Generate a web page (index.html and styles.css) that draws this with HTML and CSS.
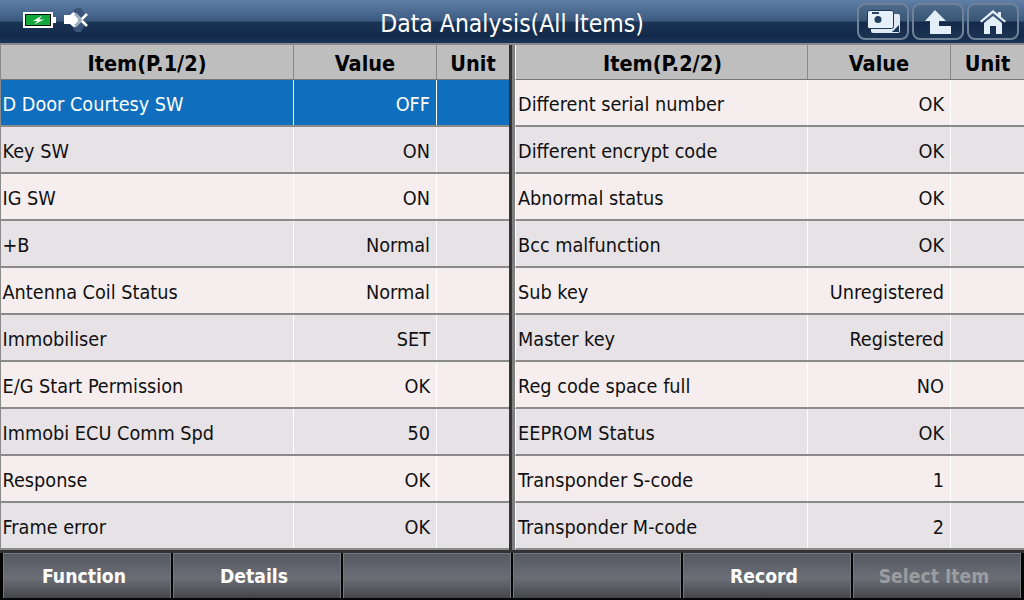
FILE: index.html
```html
<!DOCTYPE html>
<html>
<head>
<meta charset="UTF-8">
<title>Data Analysis</title>
<link rel="stylesheet" href="styles.css">
</head>
<body>
<div id="wrap">
	<div class="topbar">
		<div class="status">
			<svg class="battery" width="34" height="16" viewBox="0 0 34 16">
				<rect x="1" y="1" width="28" height="14" fill="#111" stroke="#fff" stroke-width="2"/>
				<rect x="3" y="3" width="24" height="10" fill="#12a83c"/>
				<rect x="30" y="5" width="3" height="6" fill="#fff"/>
				<path d="M19 3.500 L10 9 L14.500 9 L11 12.500 L21 7.500 L16 7.500 Z" fill="#fff"/>
			</svg>
			<svg class="mute" width="24" height="24" viewBox="0 0 24 24">
				<path d="M0 7 H6 L14 0 V23 L6 16 H0 Z" fill="#fff"/>
				<path d="M9 3 L16 12 L9 21 L15 27 L24 12 L15 -3 Z" fill="#3a5578"/>
				<path d="M11 6 L23 18 M23 6 L11 18" stroke="#fff" stroke-width="2.500"/>
				<path d="M11 6 L17 12 L11 18" fill="none" stroke="#9fb0c4" stroke-width="2.500"/>
			</svg>
		</div>
		<div class="title">Data Analysis(All Items)</div>
		<div class="topbtns">
			<div class="topbtn">
				<svg width="33" height="23" viewBox="0 0 33 23">
					<rect x="4" y="4" width="29" height="19" rx="2" fill="#dfeaf5"/>
					<path d="M32 15 V22 H25 Z" fill="#1d3656"/>
					<rect x="0.500" y="0.500" width="26" height="18" rx="2" fill="#e6f0fa" stroke="#1d3656"/>
					<rect x="5" y="2" width="7" height="2" fill="#2a4565"/>
					<circle cx="11" cy="9.500" r="3.500" fill="#22405f"/>
				</svg>
			</div>
			<div class="topbtn">
				<svg width="26" height="24" viewBox="0 0 26 24">
					<path d="M10 0 L21 11 H14 V16 H26 V24 H5 V11 H0 Z" fill="#e4eef8"/>
				</svg>
			</div>
			<div class="topbtn">
				<svg width="26" height="24" viewBox="0 0 26 24">
					<path d="M13 0 L18 4 V2 H21 V7 L26 11 L24.500 12.500 L13 3 L1.500 12.500 L0 11 Z" fill="#e4eef8"/>
					<path d="M4 13 L13 6 L22 13 V24 H16 V16 H10 V24 H4 Z" fill="#e4eef8"/>
				</svg>
			</div>
		</div>
	</div>

	<div class="tables">
		<div class="panel">
			<div class="row head"><div class="c1">Item(P.1/2)</div><div class="c2">Value</div><div class="c3">Unit</div></div>
			<div class="row sel"><div class="c1">D Door Courtesy SW</div><div class="c2">OFF</div><div class="c3"></div></div>
			<div class="row even"><div class="c1">Key SW</div><div class="c2">ON</div><div class="c3"></div></div>
			<div class="row"><div class="c1">IG SW</div><div class="c2">ON</div><div class="c3"></div></div>
			<div class="row even"><div class="c1">+B</div><div class="c2">Normal</div><div class="c3"></div></div>
			<div class="row"><div class="c1">Antenna Coil Status</div><div class="c2">Normal</div><div class="c3"></div></div>
			<div class="row even"><div class="c1">Immobiliser</div><div class="c2">SET</div><div class="c3"></div></div>
			<div class="row"><div class="c1">E/G Start Permission</div><div class="c2">OK</div><div class="c3"></div></div>
			<div class="row even"><div class="c1">Immobi ECU Comm Spd</div><div class="c2">50</div><div class="c3"></div></div>
			<div class="row"><div class="c1">Response</div><div class="c2">OK</div><div class="c3"></div></div>
			<div class="row even"><div class="c1">Frame error</div><div class="c2">OK</div><div class="c3"></div></div>
		</div>
		<div class="split"></div>
		<div class="panel">
			<div class="row head"><div class="c1">Item(P.2/2)</div><div class="c2">Value</div><div class="c3">Unit</div></div>
			<div class="row"><div class="c1">Different serial number</div><div class="c2">OK</div><div class="c3"></div></div>
			<div class="row even"><div class="c1">Different encrypt code</div><div class="c2">OK</div><div class="c3"></div></div>
			<div class="row"><div class="c1">Abnormal status</div><div class="c2">OK</div><div class="c3"></div></div>
			<div class="row even"><div class="c1">Bcc malfunction</div><div class="c2">OK</div><div class="c3"></div></div>
			<div class="row"><div class="c1">Sub key</div><div class="c2">Unregistered</div><div class="c3"></div></div>
			<div class="row even"><div class="c1">Master key</div><div class="c2">Registered</div><div class="c3"></div></div>
			<div class="row"><div class="c1">Reg code space full</div><div class="c2">NO</div><div class="c3"></div></div>
			<div class="row even"><div class="c1">EEPROM Status</div><div class="c2">OK</div><div class="c3"></div></div>
			<div class="row"><div class="c1">Transponder S-code</div><div class="c2">1</div><div class="c3"></div></div>
			<div class="row even"><div class="c1">Transponder M-code</div><div class="c2">2</div><div class="c3"></div></div>
		</div>
	</div>

	<div class="bottombar">
		<div class="btn">Function</div>
		<div class="btn">Details</div>
		<div class="btn"></div>
		<div class="btn"></div>
		<div class="btn">Record</div>
		<div class="btn off">Select Item</div>
	</div>
</div>
</body>
</html>
```

FILE: styles.css
```css
* {
	margin: 0;
	padding: 0;
	box-sizing: border-box;
}

html,
body {
	height: 100%;
	overflow: hidden;
}

#wrap {
	width: 1024px;
	height: 600px;
	display: flex;
	flex-direction: column;
	font-family: "DejaVu Sans Condensed", "DejaVu Sans", sans-serif;
	background: #555;
}

.topbar {
	height: 45px;
	display: flex;
	align-items: center;
	position: relative;
	border-bottom: 2px solid #8a8a8a;
	background: linear-gradient(#5f7fa6 0, #3c5a80 21px, #1b3557 22px, #14294a 36px, #1c3658 43px);
}

.status {
	display: flex;
	align-items: center;
	gap: 7px;
	padding: 0 0 3px 23px;
}

.title {
	position: absolute;
	left: 0;
	right: 0;
	top: 9px;
	text-align: center;
	color: #fff;
	font-size: 24.500px;
	line-height: 30px;
}

.topbtns {
	margin-left: auto;
	display: flex;
	gap: 3px;
	padding-right: 5px;
}

.topbtn {
	width: 52px;
	height: 37px;
	display: flex;
	align-items: center;
	justify-content: center;
	border: 2px solid #6f8298;
	border-radius: 8px;
	background: linear-gradient(#4d6a8b 0, #3a5676 48%, #15294a 52%, #1c3454 100%);
}

.tables {
	height: 505px;
	display: flex;
}

.panel {
	width: 509px;
	display: flex;
	flex-direction: column;
	padding-left: 1px;
	background: #8a8a8a;
}

.split + .panel {
	padding-left: 0;
}

.split {
	width: 6px;
	background: linear-gradient(90deg, #333 0, #333 3px, #808080 3px);
}

.row {
	display: flex;
	height: 47px;
	border-bottom: 2px solid #8a8a8a;
	font-size: 19.700px;
	line-height: 49px;
	color: #111;
	background: #f6eeee;
}

.split + .panel .row {
	border-left: 1px solid #fff;
}

.row.even {
	background: #e6e2e6;
}

.row.sel {
	background: #0f6ebe;
	color: #fff;
}

.row.head {
	height: 35px;
	border-bottom: 1px solid #777;
	background: #bebebe;
	font-weight: bold;
	font-size: 21.500px;
	line-height: 38px;
	color: #000;
}

.c1 {
	width: 292px;
	padding-left: 1.500px;
	white-space: nowrap;
}

.split + .panel .c1 {
	width: 291px;
	padding-left: 2px;
}

.c2 {
	width: 143px;
	padding-right: 6px;
	text-align: right;
	border-left: 1px solid #fff;
}

.c3 {
	flex: 1;
	border-left: 1px solid #fff;
}

.head .c1,
.head .c2,
.head .c3 {
	text-align: center;
	padding: 0;
	border-left-color: #888;
}

.bottombar {
	height: 50px;
	display: flex;
	gap: 2px;
	padding: 3px 3px 2px;
	background: linear-gradient(#333 0, #333 3px, #050505 3px);
}

.btn {
	flex: 1;
	display: flex;
	align-items: center;
	justify-content: center;
	padding-right: 6px;
	border: 1px solid #74777d;
	border-bottom: 0;
	background: linear-gradient(#555963, #6b6e75 55%, #43454a);
	color: #fff;
	font-weight: bold;
	font-size: 19.200px;
}

.btn.off {
	color: #9a9ca0;
}
```
